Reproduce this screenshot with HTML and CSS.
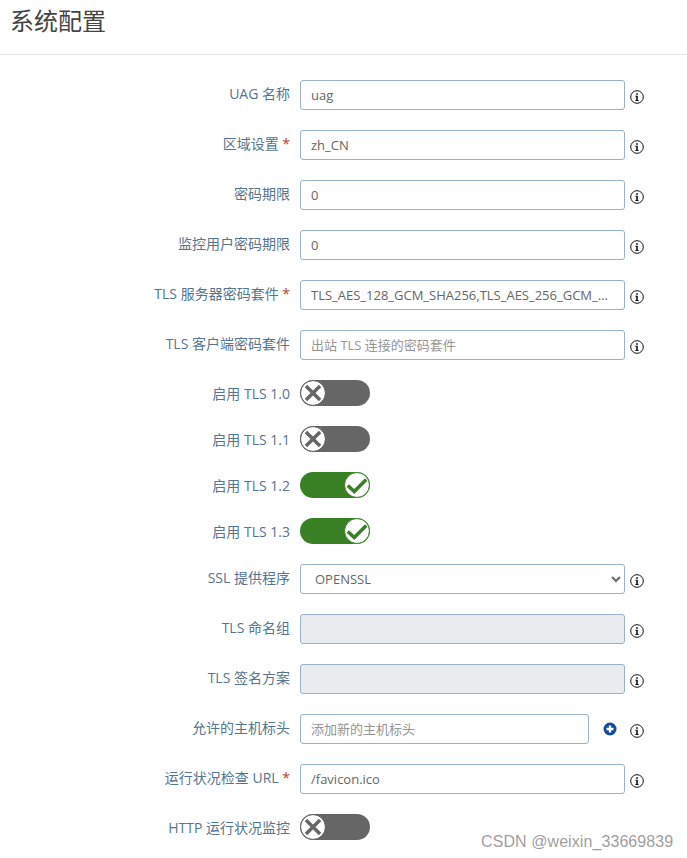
FILE: index.html
```html
<!DOCTYPE html>
<html lang="zh-CN">
<head>
<meta charset="utf-8">
<title>系统配置</title>
<link rel="stylesheet" href="styles.css">
</head>
<body>
<svg class="defs" width="0" height="0" aria-hidden="true">
  <symbol id="info" viewBox="0 0 14 14">
    <circle cx="7" cy="7" r="6.3" fill="none" stroke="#111" stroke-width="1"/>
    <rect x="6.2" y="5.8" width="1.6" height="5" fill="#111"/>
    <rect x="5.3" y="5.8" width="1.6" height="0.9" fill="#111"/>
    <rect x="5.3" y="10.1" width="3.4" height="0.9" fill="#111"/>
    <rect x="6.2" y="3.2" width="1.6" height="1.6" fill="#111"/>
  </symbol>
  <symbol id="off" viewBox="0 0 24 24">
    <circle cx="12" cy="12" r="11.5" fill="#fff" stroke="#555" stroke-width="0.9"/>
    <path d="M5.5 5.5 18.5 18.5M18.5 5.5 5.5 18.5" stroke="#666" stroke-width="3.2" fill="none"/>
  </symbol>
  <symbol id="on" viewBox="0 0 24 24">
    <circle cx="12" cy="12" r="11.5" fill="#fff" stroke="#388023" stroke-width="0.9"/>
    <path d="M3.5 12.5 9.5 18 20.5 7" stroke="#388023" stroke-width="3.2" fill="none"/>
  </symbol>
</svg>
<header class="page-head"><h1 class="page-title">系统配置</h1></header>
<form class="form">
  <div class="row"><label class="label">UAG 名称</label><input class="field" value="uag"><svg class="info"><use href="#info"/></svg></div>
  <div class="row"><label class="label">区域设置<span class="req"> *</span></label><input class="field" value="zh_CN"><svg class="info"><use href="#info"/></svg></div>
  <div class="row"><label class="label">密码期限</label><input class="field" value="0"><svg class="info"><use href="#info"/></svg></div>
  <div class="row"><label class="label">监控用户密码期限</label><input class="field" value="0"><svg class="info"><use href="#info"/></svg></div>
  <div class="row"><label class="label">TLS 服务器密码套件<span class="req"> *</span></label><input class="field" value="TLS_AES_128_GCM_SHA256,TLS_AES_256_GCM_SHA384,TLS_ECDHE_RSA"><svg class="info"><use href="#info"/></svg></div>
  <div class="row"><label class="label">TLS 客户端密码套件</label><input class="field" placeholder="出站 TLS 连接的密码套件"><svg class="info"><use href="#info"/></svg></div>
  <div class="row row-toggle"><label class="label">启用 TLS 1.0</label><div class="toggle"><svg class="knob"><use href="#off"/></svg></div></div>
  <div class="row row-toggle"><label class="label">启用 TLS 1.1</label><div class="toggle"><svg class="knob"><use href="#off"/></svg></div></div>
  <div class="row row-toggle"><label class="label">启用 TLS 1.2</label><div class="toggle is-on"><svg class="knob"><use href="#on"/></svg></div></div>
  <div class="row row-toggle"><label class="label">启用 TLS 1.3</label><div class="toggle is-on"><svg class="knob"><use href="#on"/></svg></div></div>
  <div class="row"><label class="label">SSL 提供程序</label><select class="field field-select"><option>OPENSSL</option></select><svg class="info"><use href="#info"/></svg></div>
  <div class="row"><label class="label">TLS 命名组</label><input class="field" disabled><svg class="info"><use href="#info"/></svg></div>
  <div class="row"><label class="label">TLS 签名方案</label><input class="field" disabled><svg class="info"><use href="#info"/></svg></div>
  <div class="row"><label class="label">允许的主机标头</label>
    <div class="add-group"><input class="field field-short" placeholder="添加新的主机标头">
      <svg class="plus" viewBox="0 0 14 14"><circle cx="7" cy="7" r="6.5" fill="#0f4c9c"/><path d="M3.5 7h7M7 3.5v7" stroke="#fff" stroke-width="2.4"/></svg>
    </div><svg class="info"><use href="#info"/></svg></div>
  <div class="row"><label class="label">运行状况检查 URL<span class="req"> *</span></label><input class="field" value="/favicon.ico"><svg class="info"><use href="#info"/></svg></div>
  <div class="row row-toggle"><label class="label">HTTP 运行状况监控</label><div class="toggle"><svg class="knob"><use href="#off"/></svg></div></div>
</form>
<div class="watermark">CSDN @weixin_33669839</div>
</body>
</html>
```
FILE: styles.css
```css
html, body { margin: 0; padding: 0; background: #fff; height: 858px; overflow: hidden; }
body { position: relative; font-family: "Open Sans", "Noto Sans CJK SC", sans-serif; font-size: 13px; color: #333; }
.defs { position: absolute; }
.page-head { height: 54px; border-bottom: 1px solid #e4e4e4; }
.page-title { margin: 0; padding: 5px 0 0 10px; font-size: 24px; line-height: 32px; font-weight: 400; color: #444; }
.form { padding-top: 25px; }
.row { display: grid; grid-template-columns: 290px 10px 325px 5px 14px; align-items: center; height: 30px; margin-bottom: 20px; }
.row-toggle { height: 26px; }
.label { grid-column: 1; text-align: right; color: #55758f; font-size: 14px; line-height: 20px; white-space: nowrap; margin-bottom: 2px; }
.row-toggle .label { margin-bottom: 0; margin-top: 2px; }
.req { color: #c0392b; }
.field { grid-column: 3; box-sizing: border-box; width: 325px; height: 30px; padding: 0 10px; border: 1px solid #9ab2c8; border-radius: 3px; background: #fff; font: 13px "Open Sans", "Noto Sans CJK SC", sans-serif; color: #666; text-overflow: ellipsis; outline: none; }
.field::placeholder { color: #959595; opacity: 1; }
.field:disabled { background: #e9ecef; }
.field-short { width: 289px; }
.add-group { grid-column: 3; display: flex; align-items: center; column-gap: 14px; }
.plus { width: 14px; height: 14px; flex: none; }
.info { grid-column: 5; width: 14px; height: 14px; margin-top: 3px; }
.toggle { grid-column: 3; display: flex; width: 70px; height: 26px; border-radius: 13px; background: #666; }
.toggle.is-on { background: #388023; justify-content: flex-end; }
.knob { width: 26px; height: 26px; }
.watermark { position: absolute; left: 481px; top: 832px; font: 16px/20px "Liberation Sans", sans-serif; color: #a0a0a0; letter-spacing: 0.08px; }
```
